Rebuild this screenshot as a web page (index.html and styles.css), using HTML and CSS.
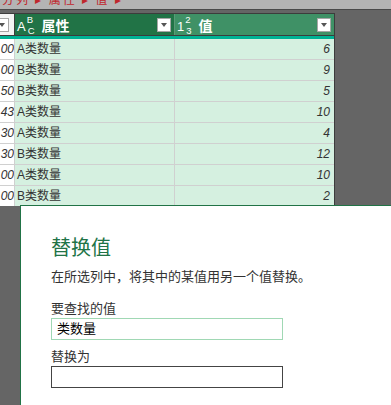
FILE: index.html
```html
<!DOCTYPE html>
<html lang="zh-CN">
<head>
    <meta charset="UTF-8">
    <title>替换值</title>
    <link rel="stylesheet" href="styles.css">
</head>
<body>
    <div class="topbar"><span>分列 ▸ 属性 ▸ 值 ▸</span></div>
    <div class="grid">
        <div class="grid-head">
            <div class="col-index"><span class="drop"></span></div>
            <div class="col-head col-a">
                <span class="type-icon"><span class="big">A</span><span class="stack"><span class="hi">B</span><span class="lo">C</span></span></span>
                <span class="col-name">属性</span>
                <span class="drop"></span>
            </div>
            <div class="col-head col-b">
                <span class="type-icon"><span class="big">1</span><span class="stack"><span class="hi">2</span><span class="lo">3</span></span></span>
                <span class="col-name">值</span>
                <span class="drop"></span>
            </div>
        </div>
        <div class="quality"></div>
        <div class="rows">
            <div class="row"><span class="idx">00</span><span class="cell">A类数量</span><span class="cell num">6</span></div>
            <div class="row"><span class="idx">00</span><span class="cell">B类数量</span><span class="cell num">9</span></div>
            <div class="row"><span class="idx">50</span><span class="cell">B类数量</span><span class="cell num">5</span></div>
            <div class="row"><span class="idx">43</span><span class="cell">A类数量</span><span class="cell num">10</span></div>
            <div class="row"><span class="idx">30</span><span class="cell">A类数量</span><span class="cell num">4</span></div>
            <div class="row"><span class="idx">30</span><span class="cell">B类数量</span><span class="cell num">12</span></div>
            <div class="row"><span class="idx">00</span><span class="cell">A类数量</span><span class="cell num">10</span></div>
            <div class="row"><span class="idx">00</span><span class="cell">B类数量</span><span class="cell num">2</span></div>
        </div>
    </div>

    <div class="dialog">
        <h2>替换值</h2>
        <p class="desc">在所选列中，将其中的某值用另一个值替换。</p>
        <label class="field-label">要查找的值</label>
        <div class="input active">类数量</div>
        <label class="field-label">替换为</label>
        <div class="input"></div>
    </div>
</body>
</html>
```

FILE: styles.css
```css
html, body {
    margin: 0;
    padding: 0;
}
body {
    width: 391px;
    height: 405px;
    overflow: hidden;
    position: relative;
    background-color: #656565;
    font-family: "Liberation Sans", "Noto Sans CJK SC", sans-serif;
    color: #333;
}
.topbar {
    height: 9px;
    background-color: #b4b4b4;
    border-bottom: 1px solid #4a4a4a;
    overflow: hidden;
    margin-bottom: 3px;
}
.topbar span {
    display: block;
    margin-top: -6px;
    padding-left: 2px;
    font-size: 12px;
    line-height: 13px;
    color: #c0262d;
    letter-spacing: 2px;
}
.grid {
    width: 334px;
    border-right: 1px solid #3c3c3c;
}
.grid-head {
    display: flex;
    height: 21px;
    border-top: 1px solid #3c3c3c;
    border-bottom: 1px solid #3c3c3c;
}
.col-index {
    width: 14px;
    background-color: #f3f3f3;
    border-right: 1px solid #3c3c3c;
    display: flex;
    align-items: center;
    overflow: hidden;
}
.col-index .drop {
    margin-left: -5px;
}
.col-head {
    display: flex;
    align-items: center;
    color: #fff;
    padding: 0 3px 0 2px;
}
.col-a {
    width: 154px;
    background-color: #217346;
    border-right: 1px solid #5a9a77;
}
.col-b {
    flex: 1;
    background-color: #3f9166;
}
.type-icon {
    display: flex;
    align-items: center;
    flex-shrink: 0;
    margin-right: 7px;
    height: 21px;
}
.type-icon .big {
    font-size: 13px;
    line-height: 13px;
    margin-top: 3px;
}
.type-icon .stack {
    display: flex;
    flex-direction: column;
    font-size: 9.5px;
    line-height: 11px;
    margin-left: 1px;
}
.type-icon .lo {
    margin-left: 1px;
}
.col-name {
    flex: 1;
    font-weight: bold;
    font-size: 14px;
}
.drop {
    flex: 0 0 14px;
    height: 14px;
    background-color: #fff;
    border: 1px solid #a6a6a6;
    box-sizing: border-box;
    display: flex;
    align-items: center;
    justify-content: center;
}
.drop::after {
    content: "";
    border-left: 3px solid transparent;
    border-right: 3px solid transparent;
    border-top: 4px solid #555;
}
.quality {
    height: 3px;
    background-color: #00b294;
}
.rows {
    height: 167px;
    overflow: hidden;
}
.row {
    display: flex;
    height: 20px;
    border-bottom: 1px solid #d0d0d0;
    font-size: 12px;
    line-height: 21px;
}
.idx {
    width: 14px;
    background-color: #fff;
    border-right: 1px solid #d0d0d0;
    overflow: hidden;
    text-align: right;
    font-style: italic;
    direction: rtl;
}
.cell {
    background-color: #d5f0e0;
    padding: 0 2px;
}
.cell:nth-child(2) {
    width: 155px;
    border-right: 1px solid #d0d0d0;
}
.cell.num {
    flex: 1;
    text-align: right;
    font-style: italic;
    padding-right: 4px;
}
.dialog {
    position: absolute;
    left: 20px;
    top: 205px;
    right: 0;
    bottom: 0;
    background-color: #fff;
    border-top: 1px solid #217346;
    border-left: 1px solid #217346;
    padding: 0 0 0 30px;
}
.dialog h2 {
    margin: 30px 0 0 0;
    font-size: 20px;
    line-height: 24px;
    font-weight: normal;
    color: #217346;
}
.desc {
    margin: 8px 0 0 0;
    font-size: 13px;
    line-height: 18px;
}
.field-label {
    display: block;
    margin-top: 15px;
    font-size: 13px;
    line-height: 16px;
}
.input {
    box-sizing: border-box;
    width: 232px;
    height: 22px;
    margin-top: 1px;
    border: 1px solid #444;
    font-size: 13px;
    line-height: 20px;
    padding-left: 5px;
    color: #000;
}
.input.active {
    border-color: #a0d8b4;
}
.input + .field-label {
    margin-top: 9px;
}
```
